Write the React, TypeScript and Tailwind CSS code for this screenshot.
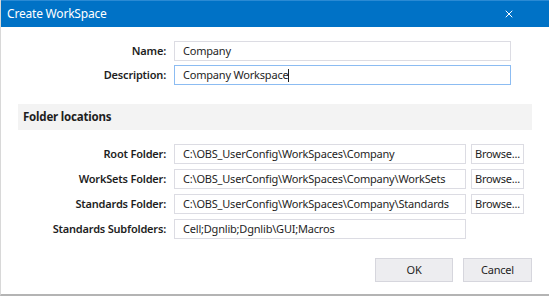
import { X } from 'lucide-react';

const font = { fontFamily: '"Noto Sans", "Open Sans", sans-serif' };

const folderRows = [
  { label: 'Root Folder:', value: 'C:\\OBS_UserConfig\\WorkSpaces\\Company', browse: true },
  { label: 'WorkSets Folder:', value: 'C:\\OBS_UserConfig\\WorkSpaces\\Company\\WorkSets', browse: true },
  { label: 'Standards Folder:', value: 'C:\\OBS_UserConfig\\WorkSpaces\\Company\\Standards', browse: true },
  { label: 'Standards Subfolders:', value: 'Cell;Dgnlib;Dgnlib\\GUI;Macros', browse: false },
];

const Field = ({ value, focused, width }: { value: string; focused?: boolean; width: string }) => (
  <div
    className={`h-[20px] ${width} border flex items-center px-[8px] text-[11px] tracking-[-0.2px] text-[#1e1e1e] bg-white whitespace-nowrap overflow-hidden ${
      focused ? 'border-[#8cbcf2]' : 'border-[#dcdce3]'
    }`}
  >
    {value}
    {focused && <span className="w-px h-[13px] bg-[#1e1e1e]" />}
  </div>
);

const App = () => {
  return (
    <div className="w-[549px] h-[296px] bg-white overflow-hidden flex flex-col border-l border-[#d8d8d8] border-b-2 border-b-[#b4b4b4]" style={font}>
      {/* Title bar */}
      <div className="h-[27px] bg-[#0072c6] border-t border-[#2a8ad4] flex items-center justify-between pl-[6px] pr-[34px] shrink-0">
        <span className="text-white text-[12px] tracking-[-0.2px]">Create WorkSpace</span>
        <X className="text-white w-[12px] h-[12px]" strokeWidth={2} />
      </div>

      {/* Name / Description */}
      <div className="mt-[14px] flex flex-col gap-[4px]">
        <div className="flex items-center">
          <div className="w-[165px] text-right text-[11px] tracking-[-0.2px] font-semibold text-[#1e1e1e]">Name:</div>
          <div className="ml-[8px]">
            <Field value="Company" width="w-[337px]" />
          </div>
        </div>
        <div className="flex items-center">
          <div className="w-[165px] text-right text-[11px] tracking-[-0.2px] font-semibold text-[#1e1e1e]">Description:</div>
          <div className="ml-[8px]">
            <Field value="Company Workspace" width="w-[337px]" focused />
          </div>
        </div>
      </div>

      {/* Folder locations header */}
      <div className="mt-[19px] ml-[17px] w-[514px] h-[26px] bg-[#f3f3f3] flex items-center pl-[5px]">
        <span className="text-[11.5px] tracking-[-0.2px] font-bold text-[#1e1e1e]">Folder locations</span>
      </div>

      {/* Folder rows */}
      <div className="mt-[14px] flex flex-col gap-[5px]">
        {folderRows.map((row) => (
          <div key={row.label} className="flex items-center">
            <div className="w-[165px] text-right text-[11px] tracking-[-0.2px] font-semibold text-[#1e1e1e]">{row.label}</div>
            <div className="ml-[8px] flex gap-[5px]">
              <Field value={row.value} width="w-[292px]" />
              {row.browse && (
                <div className="h-[20px] w-[53px] border border-[#dcdce3] bg-white text-[11px] tracking-[-0.2px] text-[#1e1e1e] flex items-center justify-center">
                  Browse...
                </div>
              )}
            </div>
          </div>
        ))}
      </div>

      {/* Buttons */}
      <div className="mt-[19px] flex justify-end gap-[10px] pr-[17px]">
        <button className="h-[24px] w-[78px] bg-[#ededf0] border border-[#d6d6dd] text-[11px] tracking-[-0.2px] text-[#1e1e1e]">OK</button>
        <button className="h-[24px] w-[69px] bg-[#ededf0] border border-[#d6d6dd] text-[11px] tracking-[-0.2px] text-[#1e1e1e]">Cancel</button>
      </div>
    </div>
  );
};

export default App;
